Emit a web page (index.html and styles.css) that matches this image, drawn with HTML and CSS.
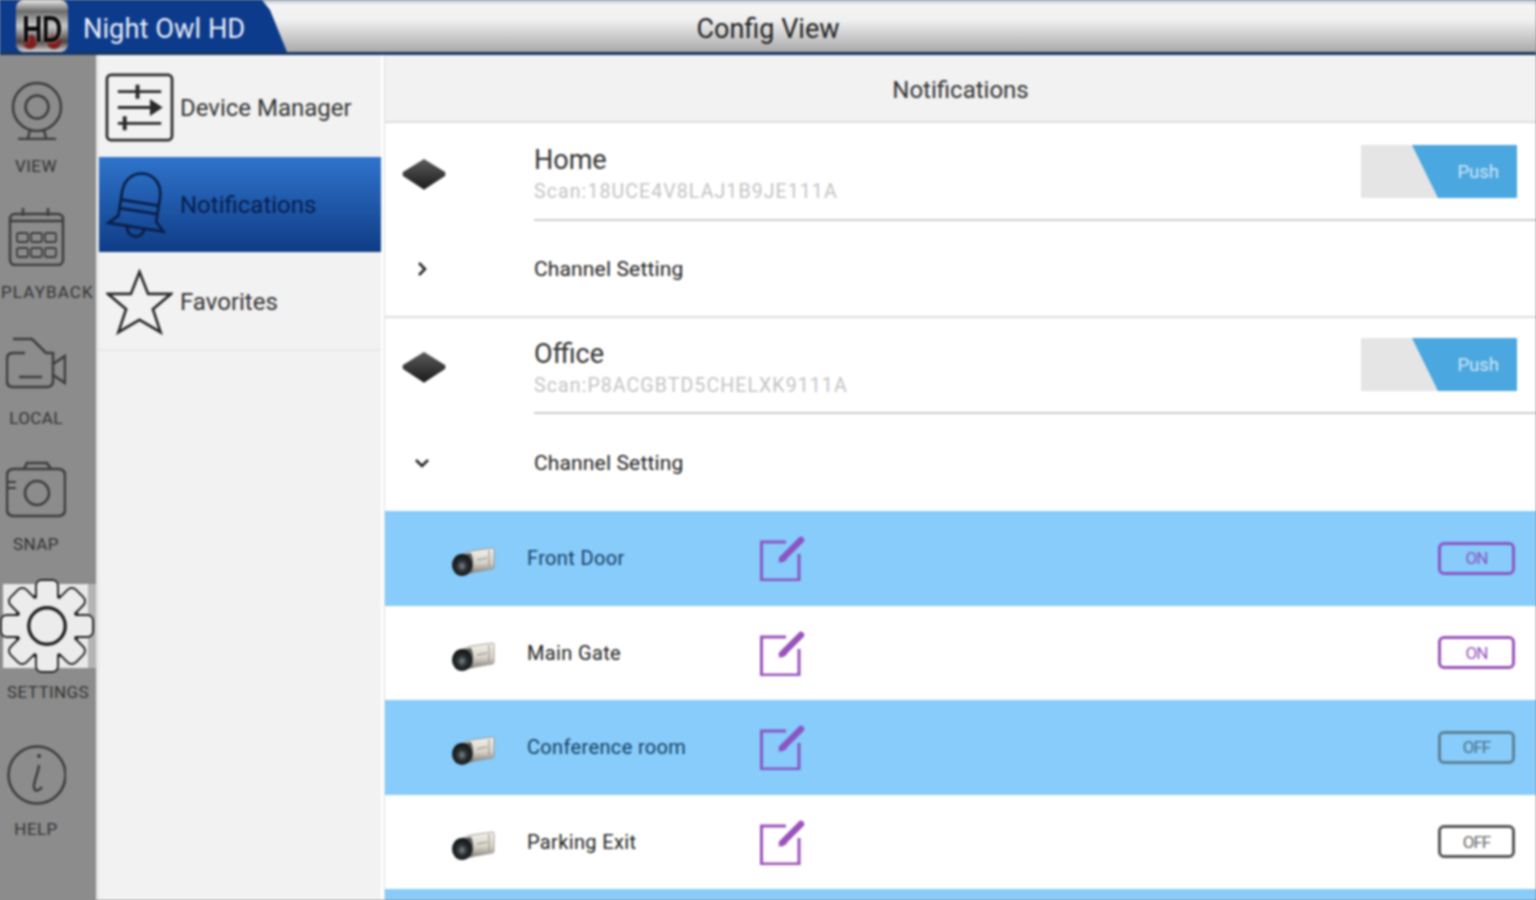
FILE: index.html
```html
<!DOCTYPE html>
<html lang="en">
<head>
    <meta charset="UTF-8">
    <title>Night Owl HD - Config View</title>
    <link rel="stylesheet" href="styles.css">
</head>
<body>
<svg class="defs" width="0" height="0">
    <defs>
        <linearGradient id="camBody" x1="0" y1="0" x2="0" y2="1">
            <stop offset="0" stop-color="#f6f3ec"/>
            <stop offset="0.55" stop-color="#d6d2c8"/>
            <stop offset="1" stop-color="#77746e"/>
        </linearGradient>
        <radialGradient id="camLens" cx="0.5" cy="0.55" r="0.55">
            <stop offset="0" stop-color="#7d878c"/>
            <stop offset="0.45" stop-color="#2a2f31"/>
            <stop offset="1" stop-color="#101112"/>
        </radialGradient>
        <linearGradient id="diamondFill" x1="0" y1="0" x2="0" y2="1">
            <stop offset="0" stop-color="#5c5c5c"/>
            <stop offset="1" stop-color="#1a1a1a"/>
        </linearGradient>
        <symbol id="camera" viewBox="0 0 44 32">
            <path d="M9 9 L20 5 L42 2 Q43 2 43 4 V21 Q43 23 41 23 L24 26 L12 29 Z" fill="url(#camBody)" stroke="#8f8c85" stroke-width="0.8"/>
            <path d="M38 4 V21 M26 14 L36 12" stroke="#8f8c86" stroke-width="1" fill="none"/>
            <path d="M9 9 L20 7 Q24 16 21 26 L10 30 Z" fill="#5a5c5c"/>
            <ellipse cx="11" cy="19" rx="10" ry="11" fill="url(#camLens)"/>
        </symbol>
        <symbol id="edit" viewBox="0 0 46 46">
            <path d="M39 19 V45 H1.5 V7 H26" fill="none" stroke="currentColor" stroke-width="3"/>
            <path d="M22 24 L41 5" fill="none" stroke="currentColor" stroke-width="6.5" stroke-linecap="round"/>
            <path d="M24 20 L18 28 L27 25 Z" fill="currentColor"/>
        </symbol>
        <symbol id="diamond" viewBox="0 0 44 32">
            <path d="M22 1 L43 14 Q44 16 43 18 L23 31 Q22 32 21 31 L1 18 Q0 16 1 14 Z" fill="url(#diamondFill)"/>
        </symbol>
        <rect id="tooth" x="39.5" y="3" width="21" height="24" rx="5"/>
        <g id="teeth">
            <use href="#tooth"/>
            <use href="#tooth" transform="rotate(45 50 50)"/>
            <use href="#tooth" transform="rotate(90 50 50)"/>
            <use href="#tooth" transform="rotate(135 50 50)"/>
            <use href="#tooth" transform="rotate(180 50 50)"/>
            <use href="#tooth" transform="rotate(225 50 50)"/>
            <use href="#tooth" transform="rotate(270 50 50)"/>
            <use href="#tooth" transform="rotate(315 50 50)"/>
        </g>
    </defs>
</svg>

<div class="app">
    <header class="topbar">
        <div class="brand">
            <div class="logo"><span class="logo-text">HD</span></div>
            <span class="brand-name">Night Owl HD</span>
        </div>
        <div class="topbar-title">Config View</div>
        <div></div>
    </header>

    <div class="content">
        <nav class="rail">
            <div class="rail-item">
                <svg class="rail-icon" viewBox="0 0 60 60">
                    <circle cx="31" cy="27" r="24"/>
                    <circle cx="31" cy="27" r="11.5"/>
                    <path d="M24 50 L22 58 M38 50 L40 58 M12 59 H50"/>
                </svg>
                <span class="rail-label">VIEW</span>
            </div>
            <div class="rail-item">
                <svg class="rail-icon" viewBox="0 0 60 60">
                    <rect x="4" y="8" width="53" height="51" rx="5"/>
                    <path d="M4 15 H57 M17 2 V10 M42 2 V10"/>
                    <rect class="thin" x="11" y="27" width="11" height="9" rx="2"/>
                    <rect class="thin" x="25" y="27" width="11" height="9" rx="2"/>
                    <rect class="thin" x="39" y="27" width="11" height="9" rx="2"/>
                    <rect class="thin" x="11" y="42" width="11" height="9" rx="2"/>
                    <rect class="thin" x="25" y="42" width="11" height="9" rx="2"/>
                    <rect class="thin" x="39" y="42" width="11" height="9" rx="2"/>
                </svg>
                <span class="rail-label rail-label-wide">PLAYBACK</span>
            </div>
            <div class="rail-item">
                <svg class="rail-icon" viewBox="0 0 60 60">
                    <path d="M7 7 H26 L40 21 H47 V49 Q47 55 41 55 H7 Q1 55 1 49 V27 Q1 21 7 21 H19"/>
                    <path d="M47 32 L59 24 V51 L47 43"/>
                    <path d="M13 45 H36"/>
                </svg>
                <span class="rail-label">LOCAL</span>
            </div>
            <div class="rail-item">
                <svg class="rail-icon" viewBox="0 0 60 60">
                    <rect x="1" y="11" width="58" height="47" rx="6"/>
                    <path d="M18 11 L21 5 H41 L45 11"/>
                    <circle cx="31" cy="35" r="12"/>
                    <path class="thin" d="M2 24 H10 M2 30 H10"/>
                </svg>
                <span class="rail-label">SNAP</span>
            </div>
            <div class="rail-item rail-item-active">
                <div class="gear-box">
                    <svg class="gear" viewBox="0 0 100 100">
                        <use href="#teeth" class="gear-edge"/>
                        <circle class="gear-edge" cx="50" cy="50" r="33"/>
                        <use href="#teeth" class="gear-fill"/>
                        <circle class="gear-hub" cx="50" cy="50" r="19"/>
                    </svg>
                </div>
                <span class="rail-label">SETTINGS</span>
            </div>
            <div class="rail-item rail-item-help">
                <svg class="rail-icon" viewBox="0 0 60 60">
                    <circle cx="31" cy="30" r="28.5"/>
                    <path d="M33 20 C32 29 27 38 28 43 C29 47 33 46 36 42"/>
                    <circle class="dot" cx="33" cy="11" r="2"/>
                </svg>
                <span class="rail-label">HELP</span>
            </div>
        </nav>

        <aside class="sidebar">
            <div class="side-item">
                <svg class="side-icon" viewBox="0 0 70 70">
                    <rect x="2" y="2" width="66" height="66" rx="4"/>
                    <path d="M13 19 H57 M13 35 H50 M13 51 H57"/>
                    <path class="knob" d="M33 12 V26 M20 44 V58"/>
                    <path class="knob-fill" d="M47 29 L56 35 L47 41 Z"/>
                </svg>
                <span>Device Manager</span>
            </div>
            <div class="side-item side-item-active">
                <svg class="side-icon" viewBox="0 0 70 72">
                    <g transform="rotate(9 35 36)">
                        <path d="M15 51 V26 C15 -4 55 -4 55 26 V51 L64 60 H6 Z"/>
                        <path d="M15 34 H55 M15 43 H55"/>
                        <path d="M26 60 C26 73 44 73 44 60"/>
                    </g>
                </svg>
                <span>Notifications</span>
            </div>
            <div class="side-item side-item-last">
                <svg class="side-icon star" viewBox="0 0 70 70">
                    <path d="M35 3 L44 26 L68 26 L49 42 L57 66 L35 53 L13 66 L21 42 L2 26 L26 26 Z"/>
                </svg>
                <span>Favorites</span>
            </div>
        </aside>

        <main class="main">
            <div class="main-title">Notifications</div>

            <section class="device">
                <div class="device-row">
                    <svg class="diamond"><use href="#diamond"/></svg>
                    <div class="device-info">
                        <div class="device-text">
                            <div class="device-name">Home</div>
                            <div class="device-scan">Scan:18UCE4V8LAJ1B9JE111A</div>
                        </div>
                        <div class="push"><div class="push-on">Push</div></div>
                    </div>
                </div>
                <div class="channel-head">
                    <svg class="chevron" viewBox="0 0 14 14"><path d="M4 1 L10 7 L4 13"/></svg>
                    <span>Channel Setting</span>
                </div>
            </section>

            <section class="device device-open">
                <div class="device-row">
                    <svg class="diamond"><use href="#diamond"/></svg>
                    <div class="device-info">
                        <div class="device-text">
                            <div class="device-name">Office</div>
                            <div class="device-scan">Scan:P8ACGBTD5CHELXK9111A</div>
                        </div>
                        <div class="push"><div class="push-on">Push</div></div>
                    </div>
                </div>
                <div class="channel-head">
                    <svg class="chevron" viewBox="0 0 14 14"><path d="M1 4 L7 10 L13 4"/></svg>
                    <span>Channel Setting</span>
                </div>
            </section>

            <div class="channel channel-blue">
                <svg class="cam"><use href="#camera"/></svg>
                <span class="channel-name">Front Door</span>
                <svg class="edit"><use href="#edit"/></svg>
                <div class="toggle toggle-on">ON</div>
            </div>
            <div class="channel">
                <svg class="cam"><use href="#camera"/></svg>
                <span class="channel-name">Main Gate</span>
                <svg class="edit"><use href="#edit"/></svg>
                <div class="toggle toggle-on">ON</div>
            </div>
            <div class="channel channel-blue">
                <svg class="cam"><use href="#camera"/></svg>
                <span class="channel-name">Conference room</span>
                <svg class="edit"><use href="#edit"/></svg>
                <div class="toggle">OFF</div>
            </div>
            <div class="channel">
                <svg class="cam"><use href="#camera"/></svg>
                <span class="channel-name">Parking Exit</span>
                <svg class="edit"><use href="#edit"/></svg>
                <div class="toggle">OFF</div>
            </div>
            <div class="channel channel-blue"></div>
        </main>
    </div>
</div>
</body>
</html>
```

FILE: styles.css
```css
html, body {
    margin: 0;
    height: 100%;
    overflow: hidden;
    background: #8c8c8c;
}
.defs {
    display: block;
    height: 0;
}
.app {
    width: 1536px;
    height: 900px;
    display: flex;
    flex-direction: column;
    overflow: hidden;
    font-family: Roboto, sans-serif;
    color: #333;
    filter: blur(0.8px);
}

/* top bar */
.topbar {
    height: 52px;
    flex: none;
    display: grid;
    grid-template-columns: 1fr auto 1fr;
    align-items: center;
    background: linear-gradient(#b9c4d2 0, #f4f4f4 5px, #f0f0f0 20px, #a9a9a9 100%);
    border-bottom: 3px solid #17365f;
}
.brand {
    width: 287px;
    height: 52px;
    display: flex;
    align-items: center;
    background: #0d3b8b;
    clip-path: polygon(0 0, 262px 0, 270px 10px, 287px 52px, 0 52px);
}
.logo {
    width: 52px;
    height: 52px;
    margin-left: 16px;
    border-radius: 8px;
    display: flex;
    align-items: center;
    justify-content: center;
    overflow: hidden;
    background:
        radial-gradient(circle at 14px 42px, #7c1f1c 6px, transparent 8px),
        radial-gradient(circle at 38px 42px, #7c1f1c 6px, transparent 8px),
        linear-gradient(#e8e8e8 0, #6a6a6a 22%, #c8c8c8 50%, #4c4242 80%, #d8d8d8 100%);
}
.logo-text {
    display: inline-block;
    margin-top: 5px;
    font-family: "Liberation Sans", sans-serif;
    font-weight: bold;
    font-size: 30px;
    letter-spacing: -1px;
    color: #0a0a0a;
    text-shadow: 0 0 2px #fff;
    transform: scale(0.95, 1.25);
}
.brand-name {
    margin: 6px 0 0 15px;
    font-size: 27.3px;
    color: #e8eefa;
}
.topbar-title {
    margin-top: 6px;
    font-size: 27px;
    color: #222;
}

.content {
    flex: 1;
    display: flex;
    min-height: 0;
}

/* left rail */
.rail {
    width: 96px;
    flex: none;
    padding-top: 25px;
    background: #8c8c8c;
    border-right: 3px solid #e4e4e4;
    display: flex;
    flex-direction: column;
}
.rail-item {
    width: 72px;
    display: flex;
    flex-direction: column;
    align-items: center;
    margin-bottom: 30px;
}
.rail-icon {
    width: 60px;
    height: 60px;
    fill: none;
    stroke: #3c3c3c;
    stroke-width: 2.5;
}
.rail-icon .thin {
    stroke-width: 1.8;
}
.rail-icon .dot {
    fill: #3c3c3c;
    stroke: none;
}
.rail-label {
    margin-top: 16px;
    font-size: 17px;
    line-height: 20px;
    letter-spacing: 0.4px;
    white-space: nowrap;
    color: #333;
}
.rail-label-wide {
    align-self: flex-start;
    margin-left: 1px;
    letter-spacing: 1.1px;
}
.rail-item-active {
    width: 96px;
    margin-bottom: 43px;
}
.gear-box {
    width: 85px;
    height: 84px;
    margin-left: 3px;
    align-self: flex-start;
    display: flex;
    align-items: center;
    justify-content: center;
    background: #e9e9e9;
    border-right: 8px solid #b4b4b4;
}
.gear {
    width: 96px;
    height: 96px;
    flex: none;
    margin-left: 3px;
    overflow: visible;
}
.gear-edge {
    fill: #ececec;
    stroke: #222;
    stroke-width: 4;
}
.gear-fill {
    fill: #ececec;
    stroke: none;
}
.gear-hub {
    fill: #ececec;
    stroke: #222;
    stroke-width: 3.5;
}
.rail-item-active .rail-label,
.rail-item-help .rail-label {
    margin-top: 14px;
}

/* middle list */
.sidebar {
    width: 282px;
    flex: none;
    padding-top: 5px;
    background: #f2f2f2;
    border-right: 3px solid #fff;
}
.side-item {
    height: 95px;
    margin-bottom: 2px;
    display: flex;
    align-items: center;
    gap: 6px;
    padding-left: 6px;
    font-size: 24px;
    color: #333;
}
.side-item span {
    margin-top: 1px;
}
.side-item-active {
    background: linear-gradient(#2f74cc, #0f3c86);
    color: #071f4c;
}
.side-item-last {
    border-bottom: 2px solid #e8e8e8;
}
.side-icon {
    width: 69px;
    height: 69px;
    flex: none;
    fill: none;
    stroke: #2a2a2a;
    stroke-width: 2.8;
}
.side-icon.star {
    width: 67px;
    height: 67px;
    margin: 2px 1px 0;
}
.side-icon .knob {
    stroke-width: 4;
}
.side-icon .knob-fill {
    fill: #2a2a2a;
}
.side-item-active .side-icon {
    stroke: #0a1f46;
}

/* right panel */
.main {
    flex: 1;
    min-width: 0;
    background: #fff;
    overflow: hidden;
    border-left: 1px solid #ddd;
}
.main-title {
    height: 62px;
    padding-top: 4px;
    display: flex;
    align-items: center;
    justify-content: center;
    background: #f2f2f2;
    border-bottom: 2px solid #ddd;
    font-size: 24px;
    color: #333;
}
.device {
    border-bottom: 2px solid #ddd;
}
.device-open {
    border-bottom: none;
}
.device-row {
    height: 98px;
    display: flex;
    align-items: stretch;
}
.device-open .device-row {
    height: 96px;
}
.diamond {
    width: 44px;
    height: 32px;
    flex: none;
    margin: 35px 0 0 17px;
}
.device-open .diamond {
    margin-top: 33px;
}
.device-info {
    flex: 1;
    margin-left: 88px;
    display: flex;
    align-items: center;
    justify-content: space-between;
    padding: 0 19px 2px 0;
    border-bottom: 2px solid #ccc;
}
.device-text {
    padding-top: 8px;
}
.device-name {
    font-size: 27px;
    line-height: 32px;
    color: #333;
}
.device-scan {
    font-size: 19.5px;
    line-height: 26px;
    margin-top: 3px;
    letter-spacing: 1.1px;
    color: #c4c4c4;
}
.push {
    width: 156px;
    height: 53px;
    margin-top: 3px;
    display: flex;
    justify-content: flex-end;
    background: #e5e5e5;
}
.device-open .push {
    margin-top: 1px;
}
.push-on {
    width: 105px;
    display: flex;
    align-items: center;
    justify-content: flex-end;
    padding-right: 18px;
    box-sizing: border-box;
    background: #4ba7df;
    clip-path: polygon(0 0, 100% 0, 100% 100%, 26px 100%);
    font-size: 18.5px;
    color: #cfe6f6;
}
.channel-head {
    height: 95px;
    display: flex;
    align-items: center;
    font-size: 21px;
    letter-spacing: 0.15px;
    color: #222;
}
.device-open .channel-head {
    height: 97px;
}
.chevron {
    width: 14px;
    height: 14px;
    flex: none;
    margin: 0 105px 0 30px;
    fill: none;
    stroke: #222;
    stroke-width: 2.5;
}
.channel {
    height: 94.5px;
    display: flex;
    align-items: center;
    color: #9a52ba;
}
.channel-blue {
    background: #87ccfa;
    color: #8a55c4;
}
.cam {
    width: 44px;
    height: 32px;
    flex: none;
    margin: 8px 0 0 66px;
}
.channel-name {
    width: 232px;
    margin-left: 32px;
    font-size: 20px;
    letter-spacing: 0.35px;
    color: #222;
}
.channel-blue .channel-name {
    color: #153f66;
}
.edit {
    width: 46px;
    height: 46px;
    flex: none;
    margin-left: 1px;
}
.toggle {
    width: 77px;
    height: 33px;
    box-sizing: border-box;
    margin-left: auto;
    margin-right: 21px;
    display: flex;
    align-items: center;
    justify-content: center;
    border: 3px solid #555;
    border-radius: 6px;
    font-size: 17px;
    letter-spacing: -1px;
    color: #666;
}
.channel-blue .toggle {
    border-color: #5d8199;
    color: #4d7189;
}
.toggle-on,
.channel-blue .toggle-on {
    border-color: currentColor;
    color: inherit;
}
```
